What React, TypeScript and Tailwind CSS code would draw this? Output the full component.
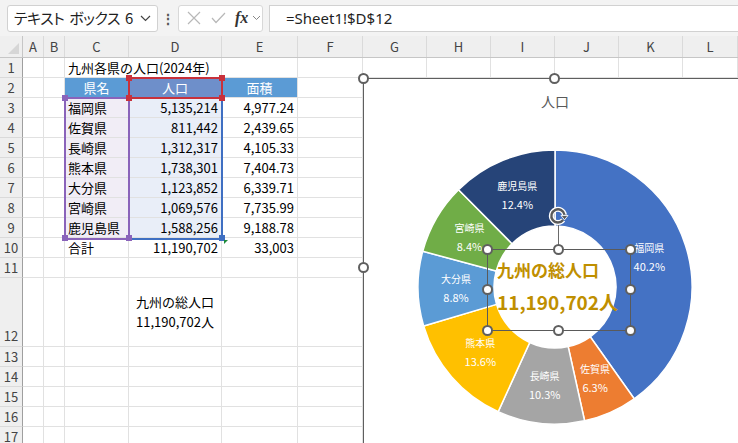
import React from "react";

const COLS = [21, 21, 64, 93, 76, 65, 64, 64, 64, 64, 64, 55];
const LETTERS = ["A", "B", "C", "D", "E", "F", "G", "H", "I", "J", "K", "L"];

const DATA: [string, string, string][] = [
  ["福岡県", "5,135,214", "4,977.24"],
  ["佐賀県", "811,442", "2,439.65"],
  ["長崎県", "1,312,317", "4,105.33"],
  ["熊本県", "1,738,301", "7,404.73"],
  ["大分県", "1,123,852", "6,339.71"],
  ["宮崎県", "1,069,576", "7,735.99"],
  ["鹿児島県", "1,588,256", "9,188.78"],
];

const SLICES = [
  { name: "福岡県", v: 5135214, c: "#4472c4" },
  { name: "佐賀県", v: 811442, c: "#ed7d31" },
  { name: "長崎県", v: 1312317, c: "#a5a5a5" },
  { name: "熊本県", v: 1738301, c: "#ffc000" },
  { name: "大分県", v: 1123852, c: "#5b9bd5" },
  { name: "宮崎県", v: 1069576, c: "#70ad47" },
  { name: "鹿児島県", v: 1588256, c: "#264478" },
];

const FONT = { fontFamily: "'Noto Sans CJK JP', 'Noto Sans', sans-serif" };

type CellProps = { children?: React.ReactNode; className?: string };

function rowHeight(n: number) {
  return n === 12 ? 69 : 20;
}

function cellFor(row: number, col: number): CellProps {
  // col: 0 = A ... 11 = L
  if (row === 1 && col === 2) return { children: "九州各県の人口(2024年)", className: "overflow-visible whitespace-nowrap border-r-transparent" };
  if (row === 2) {
    if (col === 2) return { children: "県名", className: "bg-[#5b9bd5] text-white justify-center" };
    if (col === 3) return { children: "人口", className: "bg-[#6e8fca] text-white justify-center" };
    if (col === 4) return { children: "面積", className: "bg-[#5b9bd5] text-white justify-center" };
  }
  if (row >= 3 && row <= 9) {
    const d = DATA[row - 3];
    if (col === 2) return { children: d[0], className: "bg-[#f1edf6]" };
    if (col === 3) return { children: d[1], className: "bg-[#e9eef8] justify-end" };
    if (col === 4) return { children: d[2], className: "justify-end" };
  }
  if (row === 10) {
    if (col === 2) return { children: "合計" };
    if (col === 3) return { children: "11,190,702", className: "justify-end" };
    if (col === 4) return { children: "33,003", className: "justify-end" };
  }
  if (row === 12 && col === 3)
    return {
      children: (
        <div className="flex w-full flex-col items-center gap-[4px] leading-[16px]">
          <span>九州の総人口</span>
          <span>11,190,702人</span>
        </div>
      ),
      className: "justify-center",
    };
  return {};
}

function polar(cx: number, cy: number, r: number, a: number) {
  return [cx + r * Math.sin(a), cy - r * Math.cos(a)];
}

function arcPath(cx: number, cy: number, R: number, r: number, a0: number, a1: number) {
  const large = a1 - a0 > Math.PI ? 1 : 0;
  const [x0, y0] = polar(cx, cy, R, a0);
  const [x1, y1] = polar(cx, cy, R, a1);
  const [x2, y2] = polar(cx, cy, r, a1);
  const [x3, y3] = polar(cx, cy, r, a0);
  return `M${x0} ${y0} A${R} ${R} 0 ${large} 1 ${x1} ${y1} L${x2} ${y2} A${r} ${r} 0 ${large} 0 ${x3} ${y3} Z`;
}

function Handle({ x, y }: { x: number; y: number }) {
  return (
    <div
      className="absolute h-[11px] w-[11px] rounded-full border-2 border-[#5f5f5f] bg-white"
      style={{ left: x - 5.5, top: y - 5.5 }}
    />
  );
}

function Square({ x, y, color }: { x: number; y: number; color: string }) {
  return <div className="absolute h-[6px] w-[6px]" style={{ left: x - 3, top: y - 3, background: color }} />;
}

function Donut() {
  const total = SLICES.reduce((s, x) => s + x.v, 0);
  const cx = 191;
  const cy = 164;
  let acc = 0;
  return (
    <svg width="382" height="330" className="block">
      {SLICES.map((s) => {
        const a0 = (acc / total) * Math.PI * 2;
        acc += s.v;
        const a1 = (acc / total) * Math.PI * 2;
        return <path key={s.name} d={arcPath(cx, cy, 137, 61, a0, a1)} fill={s.c} stroke="#fff" strokeWidth="1.5" />;
      })}
      {(() => {
        let a = 0;
        return SLICES.map((s) => {
          const mid = ((a + s.v / 2) / total) * Math.PI * 2;
          a += s.v;
          const [x, y] = polar(cx, cy, 99, mid);
          const pct = ((s.v / total) * 100).toFixed(1) + "%";
          return (
            <g key={s.name} fill="#fff" textAnchor="middle" style={FONT}>
              <text x={x} y={y - 5} fontSize="10">
                {s.name}
              </text>
              <text x={x} y={y + 14} fontSize="11">
                {pct}
              </text>
            </g>
          );
        });
      })()}
    </svg>
  );
}

export default function App() {
  const rows = Array.from({ length: 17 }, (_, i) => i + 1);

  return (
    <div className="relative h-[443px] w-[738px] overflow-hidden bg-white text-black" style={FONT}>
      {/* formula bar */}
      <div className="flex h-[36px] items-center bg-[#f3f3f3] pl-[7px]">
        <div className="flex h-[27px] w-[151px] items-center justify-between rounded-[3px] border border-[#d1d1d1] bg-white pl-[6px] pr-[6px] text-[15px] text-[#1f1f1f]">
          <span className="flex gap-[5px] whitespace-nowrap tracking-[-0.5px]" style={{ fontFeatureSettings: '"palt"' }}>
            <span>テキスト</span>
            <span>ボックス</span>
            <span>6</span>
          </span>
          <svg width="11" height="7" viewBox="0 0 11 7">
            <path d="M1 1l4.5 4.5L10 1" fill="none" stroke="#444" strokeWidth="1.2" />
          </svg>
        </div>
        <div className="flex w-[20px] justify-center text-[14px] font-bold text-[#555]">⋮</div>
        <div className="flex h-[27px] w-[85px] items-center rounded-[3px] border border-[#d8d8d8] bg-white pl-[8px]">
          <svg width="14" height="14" viewBox="0 0 14 14">
            <path d="M1 1l12 12M13 1L1 13" stroke="#b8b8b8" strokeWidth="1.2" />
          </svg>
          <svg width="15" height="12" viewBox="0 0 15 12" className="ml-[10px]">
            <path d="M1 6l4 4.5L14 1" fill="none" stroke="#b8b8b8" strokeWidth="1.2" />
          </svg>
          <span className="ml-[9px] font-['Liberation_Serif',serif] text-[16px] font-bold italic text-[#333]">fx</span>
          <svg width="9" height="6" viewBox="0 0 9 6" className="ml-[4px]">
            <path d="M1 1l3.5 3.5L8 1" fill="none" stroke="#888" strokeWidth="1" />
          </svg>
        </div>
        <div className="ml-[6px] flex h-[27px] flex-1 items-center border-y border-l border-[#d1d1d1] bg-white pl-[16px] font-['Noto_Sans',sans-serif] text-[15px] text-[#1f1f1f]">
          =Sheet1!$D$12
        </div>
      </div>

      {/* column headers */}
      <div className="flex h-[22px] border-b border-[#c6c6c6] bg-[#efefef] text-[13px] text-[#444]">
        <div className="relative w-[23px] border-r border-[#c6c6c6]">
          <div className="absolute bottom-[3px] right-[3px] h-0 w-0 border-b-[11px] border-l-[11px] border-b-[#d6d6d6] border-l-transparent" />
        </div>
        {LETTERS.map((l, i) => (
          <div
            key={l}
            className="flex shrink-0 items-center justify-center border-r border-[#dadada]"
            style={{ width: COLS[i] }}
          >
            {l}
          </div>
        ))}
      </div>

      {/* rows */}
      {rows.map((r) => (
        <div key={r} className="flex" style={{ height: rowHeight(r) }}>
          <div
            className={`flex w-[23px] shrink-0 justify-center border-b border-r border-b-[#dadada] border-r-[#9f9f9f] bg-[#efefef] text-[13px] text-[#444] ${r === 12 ? "items-end pb-[1px]" : "items-center"}`}
          >
            {r}
          </div>
          {COLS.map((w, c) => {
            const cell = cellFor(r, c);
            return (
              <div
                key={c}
                className={`flex shrink-0 items-center border-b border-r border-[#e1e1e1] px-[3px] text-[13px] ${cell.className ?? "overflow-hidden"}`}
                style={{ width: w }}
              >
                {cell.children}
              </div>
            );
          })}
        </div>
      ))}

      {/* selection outlines */}
      <div className="absolute left-[128px] top-[97px] h-[143px] w-[95px] border-2 border-[#3f6fc2]" />
      <div className="absolute left-[64px] top-[97px] h-[143px] w-[66px] border-2 border-[#8a63ba]" />
      <div className="absolute left-[128px] top-[77px] h-[22px] w-[95px] border-2 border-[#c8313b]" />
      <Square x={65} y={98} color="#8a63ba" />
      <Square x={65} y={238} color="#8a63ba" />
      <Square x={129} y={238} color="#8a63ba" />
      <Square x={222} y={238} color="#3f6fc2" />
      <Square x={129} y={78} color="#c8313b" />
      <Square x={222} y={78} color="#c8313b" />
      <Square x={129} y={98} color="#c8313b" />
      <Square x={222} y={98} color="#c8313b" />
      <div className="absolute left-[224px] top-[240px] h-0 w-0 border-l-[4px] border-t-[4px] border-l-transparent border-t-[#1e8a3a] [transform:scaleX(-1)]" />

      {/* chart */}
      <div className="absolute left-[363px] top-[78px] h-[380px] w-[400px] border-l border-t border-[#5f5f5f] bg-white">
        <div className="flex h-[44px] w-[382px] items-center justify-center text-[14px] text-[#595959]">人口</div>
        <Donut />
      </div>
      <Handle x={363} y={78} />
      <Handle x={554} y={78} />
      <Handle x={363} y={267} />

      {/* text box */}
      <div className="absolute left-[487px] top-[249px] flex h-[82px] w-[144px] flex-col border border-solid border-[#5a5a5a] pl-[9px] pt-[8px] font-bold text-[#bf8f00]">
        <span className="text-[17px] leading-[24px]">九州の総人口</span>
        <span className="mt-[4px] whitespace-nowrap text-[19px] leading-[32px]">11,190,702人</span>
      </div>
      <div className="absolute left-[558px] top-[224px] h-[25px] w-px bg-[#6a6a6a]" />
      <svg className="absolute left-[548px] top-[205px]" width="22" height="22" viewBox="0 0 20 20">
        <path d="M13.8 13.6A6 6 0 1 1 15 9" fill="none" stroke="#fff" strokeWidth="4.5" />
        <path d="M13.8 13.6A6 6 0 1 1 15 9" fill="none" stroke="#5a5a5a" strokeWidth="2.2" />
        <path d="M11.8 9.5h6.4l-3.2 4z" fill="#5a5a5a" stroke="#fff" strokeWidth="0.8" />
      </svg>
      <Handle x={487} y={249} />
      <Handle x={558} y={249} />
      <Handle x={630} y={249} />
      <Handle x={487} y={289} />
      <Handle x={630} y={289} />
      <Handle x={487} y={330} />
      <Handle x={558} y={330} />
      <Handle x={630} y={330} />
    </div>
  );
}
